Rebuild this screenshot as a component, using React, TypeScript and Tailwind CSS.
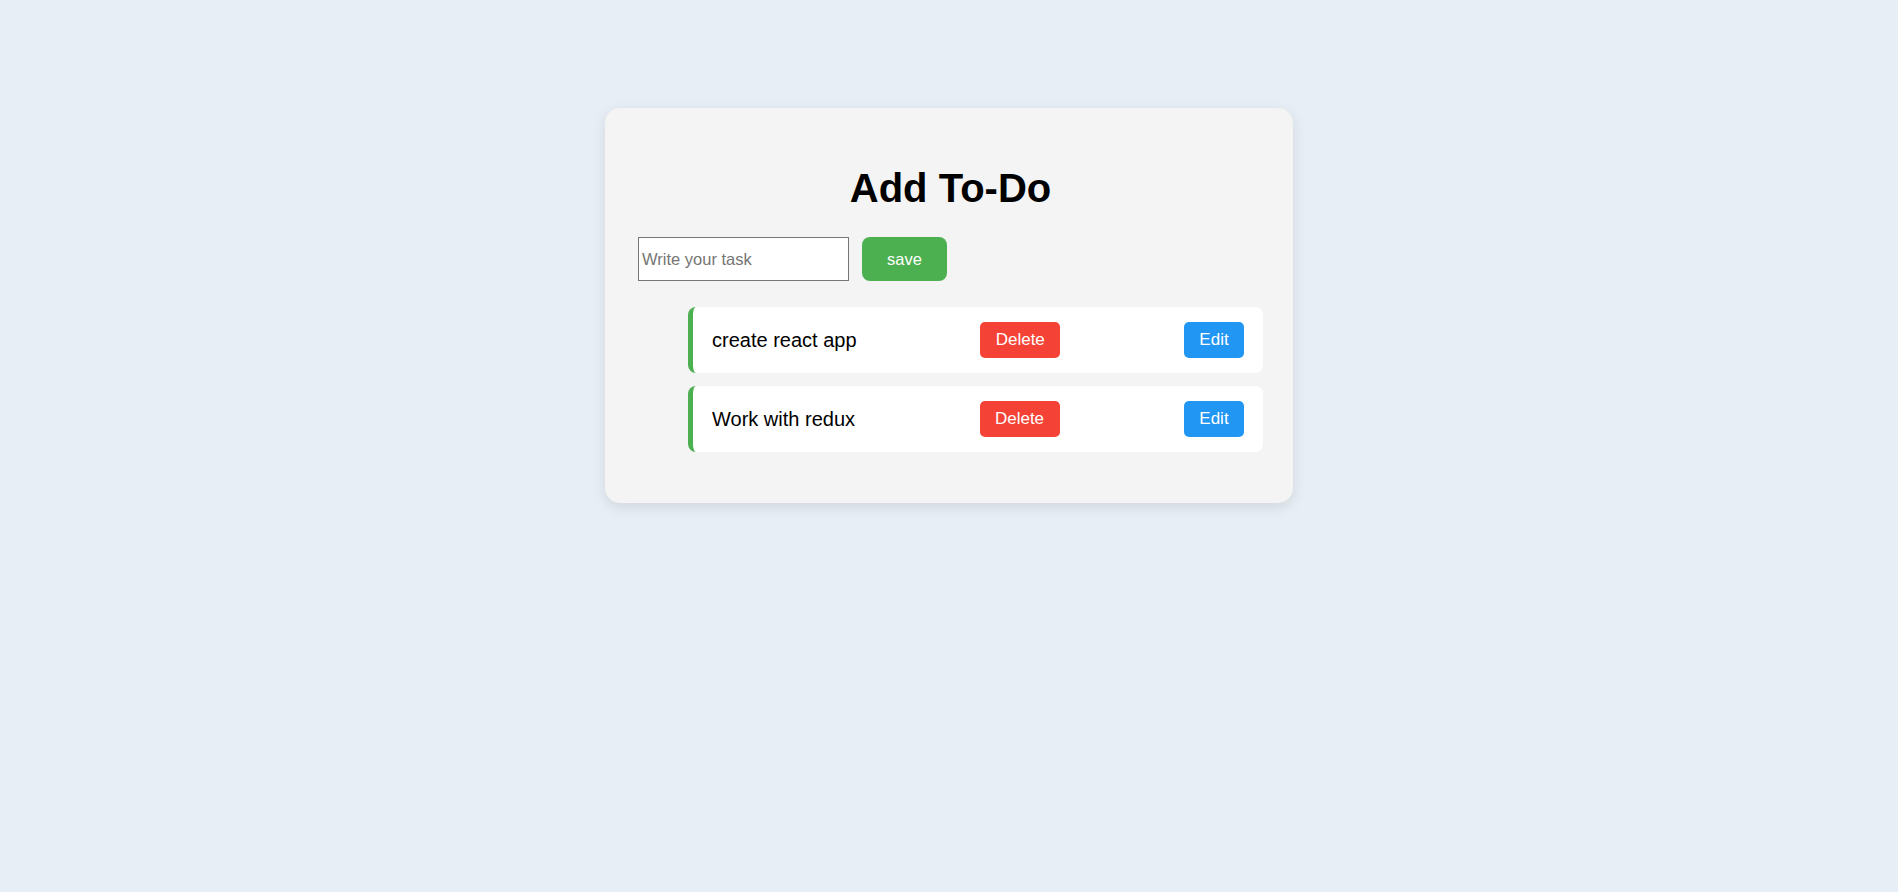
import { useState } from 'react';

type Todo = { id: number; text: string };

export default function App() {
  const [task, setTask] = useState('');
  const [todos, setTodos] = useState<Todo[]>([
    { id: 1, text: 'create react app' },
    { id: 2, text: 'Work with redux' },
  ]);

  const save = () => {
    if (!task.trim()) return;
    setTodos(prev => [...prev, { id: Date.now(), text: task }]);
    setTask('');
  };

  const remove = (id: number) => setTodos(prev => prev.filter(t => t.id !== id));

  return (
    <div
      className="min-h-screen bg-[#e8eef5] pt-[108px]"
      style={{ fontFamily: '"Liberation Sans", Arial, sans-serif' }}
    >
      <div className="mx-auto w-[688px] rounded-[15px] bg-[#f4f4f4] pl-[33px] pr-[30px] pt-[57px] pb-[51px] shadow-[0_4px_14px_rgba(0,0,0,0.1)]">
        <h1 className="text-center text-[40px] font-bold leading-[46px] text-black">Add To-Do</h1>

        <div className="mt-[26px] flex items-center gap-[13px]">
          <input
            value={task}
            onChange={e => setTask(e.target.value)}
            placeholder="Write your task"
            className="h-[44px] w-[211px] border border-[#767676] bg-white px-[3px] text-[16.5px] text-black outline-none placeholder:text-[#757575]"
          />
          <button
            onClick={save}
            className="h-[44px] w-[85px] rounded-[8px] bg-[#4caf50] text-[16.5px] text-white"
          >
            save
          </button>
        </div>

        <ul className="mt-[26px] flex flex-col gap-[13px] pl-[50px]">
          {todos.map(todo => (
            <li
              key={todo.id}
              className="flex h-[66px] items-center justify-between rounded-[8px] border-l-[5px] border-[#4caf50] bg-white pl-[19px] pr-[19px]"
            >
              <span className="text-[20px] text-black">{todo.text}</span>
              <button
                onClick={() => remove(todo.id)}
                className="h-[36px] w-[80px] rounded-[5px] bg-[#f44336] text-[17px] text-white"
              >
                Delete
              </button>
              <button className="h-[36px] w-[60px] rounded-[5px] bg-[#2196f3] text-[17px] text-white">
                Edit
              </button>
            </li>
          ))}
        </ul>
      </div>
    </div>
  );
}
